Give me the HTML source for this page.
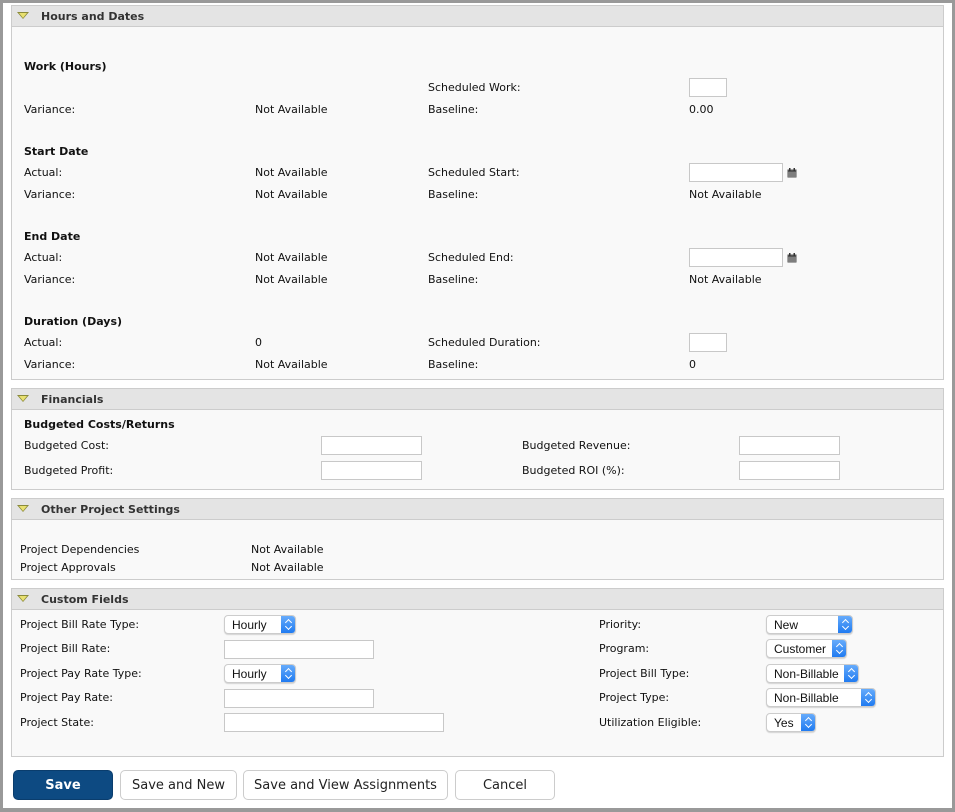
<!DOCTYPE html>
<html><head><meta charset="utf-8"><style>
*{box-sizing:border-box;margin:0;padding:0}
body{width:955px;height:812px;background:#fff;position:relative;overflow:hidden;font-family:"DejaVu Sans","Liberation Sans",sans-serif;font-size:11px;color:#111}
.frame{position:absolute;left:0;top:0;width:955px;height:812px;border:3px solid #999;border-right-width:3px;border-bottom-width:4px}
.sec{position:absolute;left:11px;width:933px;background:#f9f9f9;border:1px solid #ccc}
.hd{position:absolute;left:0;top:0;width:100%;height:21px;background:#e4e4e4;border-bottom:1px solid #ccc;font-weight:bold;font-size:11px;color:#333;line-height:21px;padding-left:29px}
.tri{position:absolute;left:5px;top:6px;width:0;height:0;border-left:6px solid transparent;border-right:6px solid transparent;border-top:7px solid #8a8a3a}
.tri:after{content:"";position:absolute;left:-4px;top:-6px;border-left:4px solid transparent;border-right:4px solid transparent;border-top:5px solid #e8e070}
.t{position:absolute;line-height:14px;white-space:nowrap}
.b{font-weight:bold}
.in{position:absolute;height:19px;background:#fff;border:1px solid #c8c8c8}
.sel{position:absolute;height:19px;background:#fff;border:1px solid #ccc;border-radius:4px;box-shadow:0 1px 1px rgba(0,0,0,.15);font-family:"Liberation Sans",sans-serif;font-size:12px;line-height:19px;padding-left:7px;overflow:hidden}
.sel i{position:absolute;right:-1px;top:-1px;width:15px;height:19px;background:linear-gradient(#6aaefc,#1c78f0);border-radius:0 4px 4px 0}
.sel i:before{content:"";position:absolute;left:5px;top:5px;width:4px;height:4px;border-left:1.3px solid #fff;border-top:1.3px solid #fff;transform:rotate(45deg)}
.sel i:after{content:"";position:absolute;left:5px;top:9px;width:4px;height:4px;border-right:1.3px solid #fff;border-bottom:1.3px solid #fff;transform:rotate(45deg)}
.btn{position:absolute;top:770px;height:30px;border:1px solid #ccc;border-radius:5px;background:#fff;font-size:13px;text-align:center;line-height:30px;color:#222}
.cal{position:absolute;width:10px;height:10px}
</style></head><body>
<div class="frame"></div>

<div class="sec" style="top:5px;height:375px"><div class="hd"><span class="tri"></span>Hours and Dates</div></div>
<div class="sec" style="top:388px;height:102px"><div class="hd"><span class="tri"></span>Financials</div></div>
<div class="sec" style="top:498px;height:82px"><div class="hd"><span class="tri"></span>Other Project Settings</div></div>
<div class="sec" style="top:588px;height:169px"><div class="hd"><span class="tri"></span>Custom Fields</div></div>

<div class="t b" style="left:24px;top:60px">Work (Hours)</div>
<div class="t" style="left:428px;top:81px">Scheduled Work:</div>
<div class="in" style="left:689px;top:78px;width:38px"></div>
<div class="t" style="left:24px;top:103px">Variance:</div>
<div class="t" style="left:255px;top:103px">Not Available</div>
<div class="t" style="left:428px;top:103px">Baseline:</div>
<div class="t" style="left:689px;top:103px">0.00</div>

<div class="t b" style="left:24px;top:145px">Start Date</div>
<div class="t" style="left:24px;top:166px">Actual:</div>
<div class="t" style="left:255px;top:166px">Not Available</div>
<div class="t" style="left:428px;top:166px">Scheduled Start:</div>
<div class="in" style="left:689px;top:163px;width:94px"></div>
<svg class="cal" style="left:787px;top:168px" viewBox="0 0 10 10"><rect x="0.5" y="1.5" width="9" height="8" fill="#555"/><rect x="2" y="0" width="1.5" height="3" fill="#333"/><rect x="6.5" y="0" width="1.5" height="3" fill="#333"/><path d="M2 4v5M4 4v5M6 4v5M8 4v5" stroke="#ddd" stroke-width=".6"/></svg>
<div class="t" style="left:24px;top:188px">Variance:</div>
<div class="t" style="left:255px;top:188px">Not Available</div>
<div class="t" style="left:428px;top:188px">Baseline:</div>
<div class="t" style="left:689px;top:188px">Not Available</div>

<div class="t b" style="left:24px;top:230px">End Date</div>
<div class="t" style="left:24px;top:251px">Actual:</div>
<div class="t" style="left:255px;top:251px">Not Available</div>
<div class="t" style="left:428px;top:251px">Scheduled End:</div>
<div class="in" style="left:689px;top:248px;width:94px"></div>
<svg class="cal" style="left:787px;top:253px" viewBox="0 0 10 10"><rect x="0.5" y="1.5" width="9" height="8" fill="#555"/><rect x="2" y="0" width="1.5" height="3" fill="#333"/><rect x="6.5" y="0" width="1.5" height="3" fill="#333"/><path d="M2 4v5M4 4v5M6 4v5M8 4v5" stroke="#ddd" stroke-width=".6"/></svg>
<div class="t" style="left:24px;top:273px">Variance:</div>
<div class="t" style="left:255px;top:273px">Not Available</div>
<div class="t" style="left:428px;top:273px">Baseline:</div>
<div class="t" style="left:689px;top:273px">Not Available</div>

<div class="t b" style="left:24px;top:315px">Duration (Days)</div>
<div class="t" style="left:24px;top:336px">Actual:</div>
<div class="t" style="left:255px;top:336px">0</div>
<div class="t" style="left:428px;top:336px">Scheduled Duration:</div>
<div class="in" style="left:689px;top:333px;width:38px"></div>
<div class="t" style="left:24px;top:358px">Variance:</div>
<div class="t" style="left:255px;top:358px">Not Available</div>
<div class="t" style="left:428px;top:358px">Baseline:</div>
<div class="t" style="left:689px;top:358px">0</div>

<div class="t b" style="left:24px;top:418px">Budgeted Costs/Returns</div>
<div class="t" style="left:24px;top:439px">Budgeted Cost:</div>
<div class="in" style="left:321px;top:436px;width:101px"></div>
<div class="t" style="left:522px;top:439px">Budgeted Revenue:</div>
<div class="in" style="left:739px;top:436px;width:101px"></div>
<div class="t" style="left:24px;top:464px">Budgeted Profit:</div>
<div class="in" style="left:321px;top:461px;width:101px"></div>
<div class="t" style="left:522px;top:464px">Budgeted ROI (%):</div>
<div class="in" style="left:739px;top:461px;width:101px"></div>

<div class="t" style="left:20px;top:543px">Project Dependencies</div>
<div class="t" style="left:251px;top:543px">Not Available</div>
<div class="t" style="left:20px;top:561px">Project Approvals</div>
<div class="t" style="left:251px;top:561px">Not Available</div>

<div class="t" style="left:20px;top:618px">Project Bill Rate Type:</div>
<div class="sel" style="left:224px;top:615px;width:72px">Hourly<i></i></div>
<div class="t" style="left:20px;top:642px">Project Bill Rate:</div>
<div class="in" style="left:224px;top:640px;width:150px"></div>
<div class="t" style="left:20px;top:667px">Project Pay Rate Type:</div>
<div class="sel" style="left:224px;top:664px;width:72px">Hourly<i></i></div>
<div class="t" style="left:20px;top:691px">Project Pay Rate:</div>
<div class="in" style="left:224px;top:689px;width:150px"></div>
<div class="t" style="left:20px;top:716px">Project State:</div>
<div class="in" style="left:224px;top:713px;width:220px"></div>

<div class="t" style="left:599px;top:618px">Priority:</div>
<div class="sel" style="left:766px;top:615px;width:87px">New<i></i></div>
<div class="t" style="left:599px;top:642px">Program:</div>
<div class="sel" style="left:766px;top:639px;width:81px">Customer<i></i></div>
<div class="t" style="left:599px;top:667px">Project Bill Type:</div>
<div class="sel" style="left:766px;top:664px;width:93px">Non-Billable<i></i></div>
<div class="t" style="left:599px;top:691px">Project Type:</div>
<div class="sel" style="left:766px;top:688px;width:110px">Non-Billable<i></i></div>
<div class="t" style="left:599px;top:716px">Utilization Eligible:</div>
<div class="sel" style="left:766px;top:713px;width:50px">Yes<i></i></div>

<div class="btn" style="left:13px;width:100px;background:#0d4a82;border-color:#0a3d6d;color:#fff;font-weight:bold">Save</div>
<div class="btn" style="left:120px;width:117px">Save and New</div>
<div class="btn" style="left:243px;width:205px">Save and View Assignments</div>
<div class="btn" style="left:455px;width:100px">Cancel</div>
</body></html>
